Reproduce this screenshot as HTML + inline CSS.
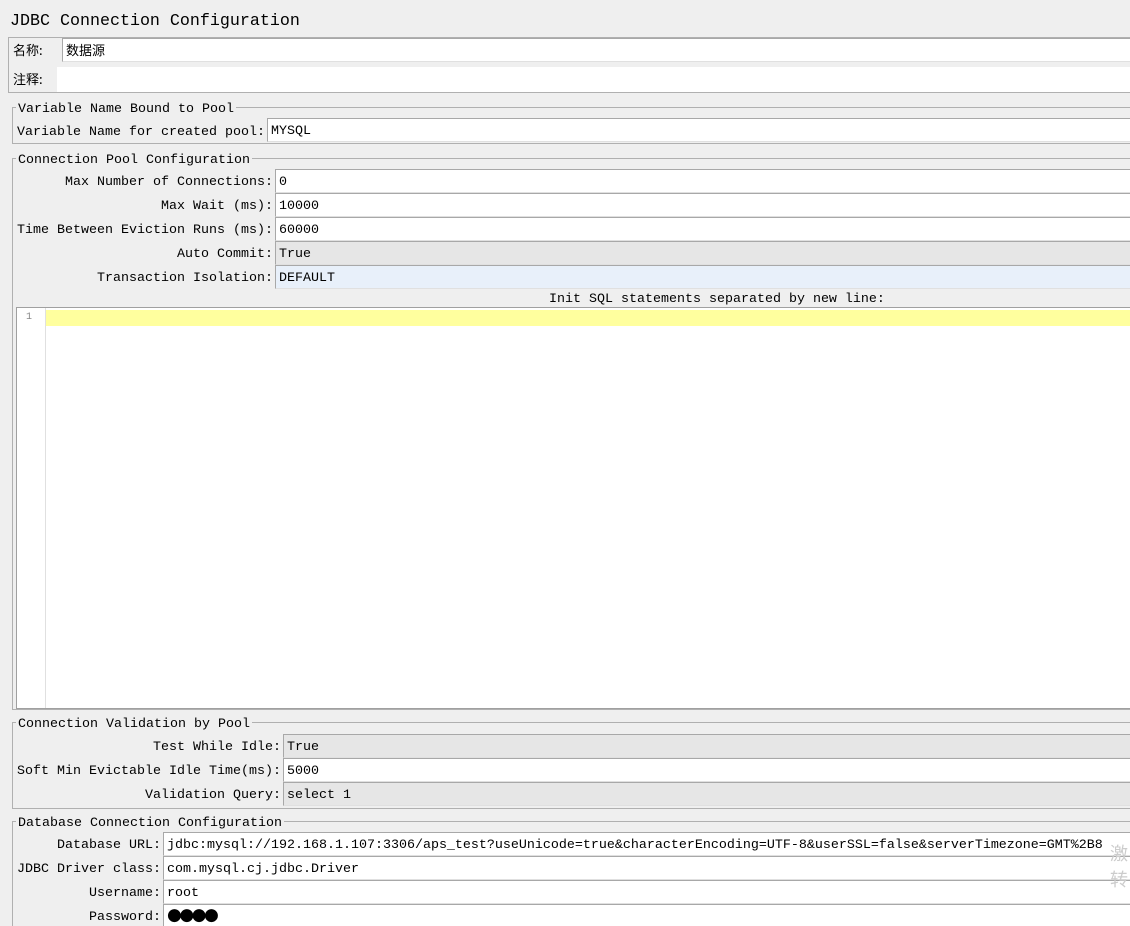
<!DOCTYPE html>
<html><head><meta charset="utf-8"><style>
*{box-sizing:border-box;margin:0;padding:0}
html,body{width:1130px;height:926px;overflow:hidden}
body{background:#efefef;font-family:"Liberation Mono","Noto Sans CJK SC",monospace;font-size:13.33px;color:#000;position:relative}
.a{position:absolute;white-space:nowrap}
.in{position:absolute;right:-4px;height:24px;background:#fff;border:1px solid #a8a8a8;border-right:none;border-bottom-color:#e0e0e0;padding:5px 0 0 3px;line-height:16px}
.g{background:#e6e6e6}
.b{background:#e8f0fa}
.box{position:absolute;right:-4px;border:1px solid #b0b0b0;border-right:none}
.lt{position:absolute;background:#efefef;padding:0 2px;line-height:14px;margin-top:3px}
.lb{position:absolute;text-align:right;line-height:16px;margin-top:2px}
</style></head><body>
<div class="a" style="left:10px;top:12px;font-size:16.67px;line-height:20px">JDBC Connection Configuration</div>

<div class="box" style="left:8px;top:37px;height:56px"></div>
<div class="a" style="left:13px;top:42px;line-height:16px;font-family:'Noto Sans CJK SC',sans-serif;font-size:13px">名称:</div>
<div class="in" style="left:62px;top:38px;font-family:'Noto Sans CJK SC',sans-serif;font-size:13px;padding-top:3px">数据源</div>
<div class="a" style="left:13px;top:71px;line-height:16px;font-family:'Noto Sans CJK SC',sans-serif;font-size:13px">注释:</div>
<div class="a" style="left:57px;top:67px;right:0;height:25px;background:#fff"></div>

<div class="box" style="left:12px;top:107px;height:37px"></div>
<div class="lt" style="left:16px;top:100px">Variable Name Bound to Pool</div>
<div class="lb" style="left:17px;top:123px">Variable Name for created pool:</div>
<div class="in" style="left:267px;top:118px">MYSQL</div>

<div class="box" style="left:12px;top:158px;height:552px"></div>
<div class="lt" style="left:16px;top:151px">Connection Pool Configuration</div>
<div class="lb" style="right:857px;top:173px">Max Number of Connections:</div>
<div class="in" style="left:275px;top:169px">0</div>
<div class="lb" style="right:857px;top:197px">Max Wait (ms):</div>
<div class="in" style="left:275px;top:193px">10000</div>
<div class="lb" style="right:857px;top:221px">Time Between Eviction Runs (ms):</div>
<div class="in" style="left:275px;top:217px">60000</div>
<div class="lb" style="right:857px;top:245px">Auto Commit:</div>
<div class="in g" style="left:275px;top:241px">True</div>
<div class="lb" style="right:857px;top:269px">Transaction Isolation:</div>
<div class="in b" style="left:275px;top:265px">DEFAULT</div>
<div class="a" style="left:549px;top:292px;line-height:16px">Init SQL statements separated by new line:</div>
<div class="a" style="left:16px;top:307px;right:0;height:402px;background:#fff;border:1px solid #a0a0a0;border-right:none"></div>
<div class="a" style="left:17px;top:308px;width:29px;height:400px;border-right:1px solid #e0e0e0;background:#fff"></div>
<div class="a" style="left:26px;top:312px;font-size:10px;color:#888;line-height:12px">1</div>
<div class="a" style="left:46px;top:310px;right:0;height:16px;background:#ffff9e"></div>

<div class="box" style="left:12px;top:722px;height:87px"></div>
<div class="lt" style="left:16px;top:715px">Connection Validation by Pool</div>
<div class="lb" style="right:849px;top:738px">Test While Idle:</div>
<div class="in g" style="left:283px;top:734px">True</div>
<div class="lb" style="right:849px;top:762px">Soft Min Evictable Idle Time(ms):</div>
<div class="in" style="left:283px;top:758px">5000</div>
<div class="lb" style="right:849px;top:786px">Validation Query:</div>
<div class="in g" style="left:283px;top:782px">select 1</div>

<div class="box" style="left:12px;top:821px;height:120px"></div>
<div class="lt" style="left:16px;top:814px">Database Connection Configuration</div>
<div class="lb" style="right:969px;top:836px">Database URL:</div>
<div class="in" style="left:163px;top:832px">jdbc:mysql://192.168.1.107:3306/aps_test?useUnicode=true&amp;characterEncoding=UTF-8&amp;userSSL=false&amp;serverTimezone=GMT%2B8</div>
<div class="lb" style="right:969px;top:860px">JDBC Driver class:</div>
<div class="in" style="left:163px;top:856px">com.mysql.cj.jdbc.Driver</div>
<div class="lb" style="right:969px;top:884px">Username:</div>
<div class="in" style="left:163px;top:880px">root</div>
<div class="lb" style="right:969px;top:908px">Password:</div>
<div class="in" style="left:163px;top:904px;font-family:'DejaVu Sans',sans-serif;font-size:17px;letter-spacing:-2.5px;padding-top:0px;line-height:20px">●●●●</div>
<div class="a" style="left:1110px;top:840px;color:#ccc;font-family:'Noto Sans CJK SC',sans-serif;font-size:18px;line-height:26px">激<br>转</div>
</body></html>
